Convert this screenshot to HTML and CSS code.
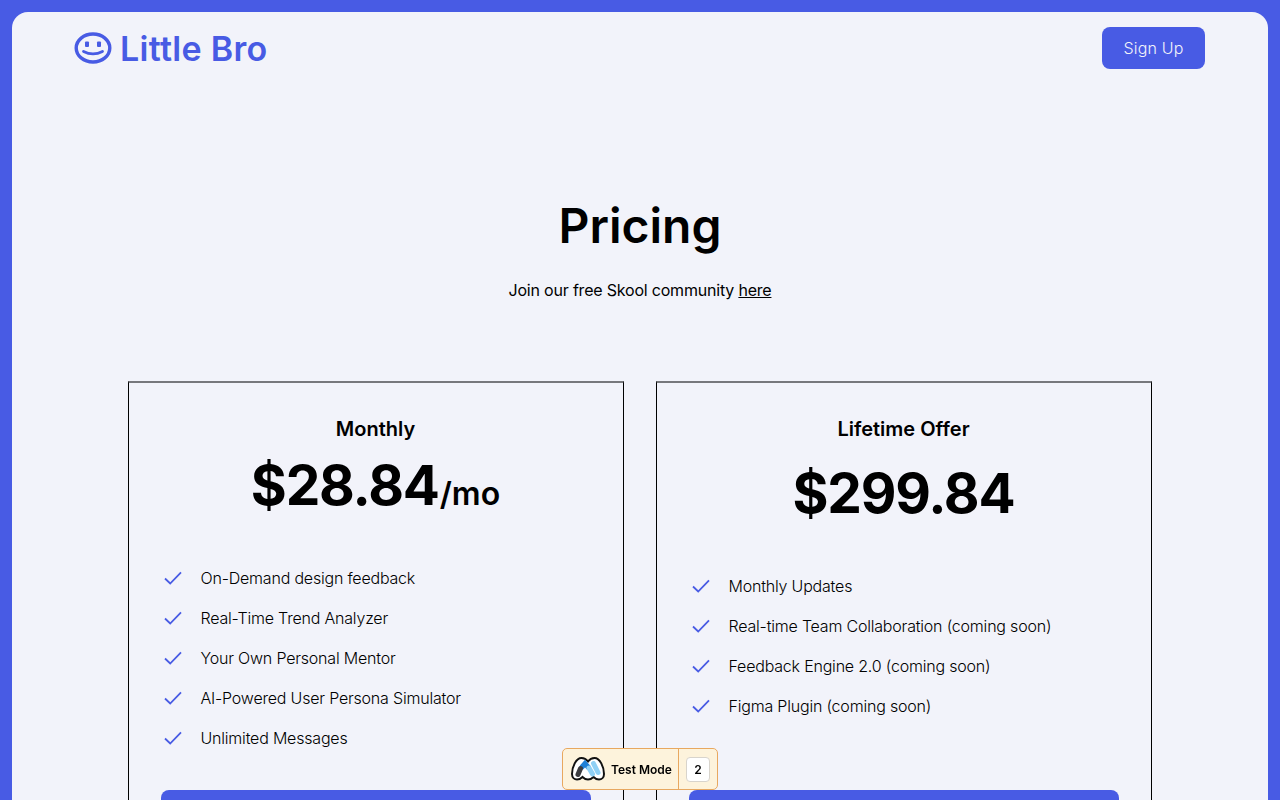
FILE: index.html
```html
<!DOCTYPE html>
<html lang="en">
<head>
    <meta charset="UTF-8">
    <meta name="viewport" content="width=device-width, initial-scale=1.0">
    <title>Little Bro - Pricing</title>
    <link rel="stylesheet" href="styles.css">
</head>
<body>
    <div class="frame">
        <div class="navbar">
            <a class="logo" href="#">
                <svg class="logo-icon" width="38" height="32" viewBox="0 0 38 32" fill="none" stroke="#485be4">
                    <ellipse cx="19" cy="16" rx="16.8" ry="14" stroke-width="3.4"/>
                    <rect x="11" y="9.500" width="4" height="5.500" rx="1" fill="#485be4" stroke="none"/>
                    <rect x="23" y="9.500" width="4" height="5.500" rx="1" fill="#485be4" stroke="none"/>
                    <path d="M9.500 19.500c6 3 13 3 19 0" stroke-width="2.800" stroke-linecap="round"/>
                </svg>
                <span class="logo-text">Little Bro</span>
            </a>
            <a class="signup" href="#">Sign Up</a>
        </div>

        <div class="heading">
            <h1>Pricing</h1>
            <p>Join our free Skool community <a href="#">here</a></p>
        </div>

        <div class="plans">
            <div class="plan">
                <h2>Monthly</h2>
                <div class="price">$28.84<span class="per">/mo</span></div>
                <ul class="features">
                    <li><svg class="check" width="18" height="14" viewBox="0 0 18 14" fill="none" stroke="#485be4" stroke-width="1.800"><path d="M1 7.500l5.200 5L17 1.300"/></svg>On-Demand design feedback</li>
                    <li><svg class="check" width="18" height="14" viewBox="0 0 18 14" fill="none" stroke="#485be4" stroke-width="1.800"><path d="M1 7.500l5.200 5L17 1.300"/></svg>Real-Time Trend Analyzer</li>
                    <li><svg class="check" width="18" height="14" viewBox="0 0 18 14" fill="none" stroke="#485be4" stroke-width="1.800"><path d="M1 7.500l5.200 5L17 1.300"/></svg>Your Own Personal Mentor</li>
                    <li><svg class="check" width="18" height="14" viewBox="0 0 18 14" fill="none" stroke="#485be4" stroke-width="1.800"><path d="M1 7.500l5.200 5L17 1.300"/></svg>AI-Powered User Persona Simulator</li>
                    <li><svg class="check" width="18" height="14" viewBox="0 0 18 14" fill="none" stroke="#485be4" stroke-width="1.800"><path d="M1 7.500l5.200 5L17 1.300"/></svg>Unlimited Messages</li>
                </ul>
                <a class="buy" href="#"></a>
            </div>
            <div class="plan">
                <h2>Lifetime Offer</h2>
                <div class="price price-big">$299.84</div>
                <ul class="features">
                    <li><svg class="check" width="18" height="14" viewBox="0 0 18 14" fill="none" stroke="#485be4" stroke-width="1.800"><path d="M1 7.500l5.200 5L17 1.300"/></svg>Monthly Updates</li>
                    <li><svg class="check" width="18" height="14" viewBox="0 0 18 14" fill="none" stroke="#485be4" stroke-width="1.800"><path d="M1 7.500l5.200 5L17 1.300"/></svg>Real-time Team Collaboration (coming soon)</li>
                    <li><svg class="check" width="18" height="14" viewBox="0 0 18 14" fill="none" stroke="#485be4" stroke-width="1.800"><path d="M1 7.500l5.200 5L17 1.300"/></svg>Feedback Engine 2.0 (coming soon)</li>
                    <li><svg class="check" width="18" height="14" viewBox="0 0 18 14" fill="none" stroke="#485be4" stroke-width="1.800"><path d="M1 7.500l5.200 5L17 1.300"/></svg>Figma Plugin (coming soon)</li>
                </ul>
                <a class="buy" href="#"></a>
            </div>
        </div>
    </div>

    <div class="test-badge">
        <div class="test-label">
            <svg width="36" height="26" viewBox="0 0 36 26" fill="none">
                <path d="M2 18C2 11 6 2 11.500 2c3 0 5 1.500 6.500 3.500C19.500 3.500 21.500 2 24.500 2 30 2 34 11 34 18c0 3.500-2.500 5.500-5 5.500-2.500 0-4-1-5.500-2.500-1.500 1.500-3 2.500-5.500 2.500s-4-1-5.500-2.500C11 22.500 9.500 23.500 7 23.500c-2.500 0-5-2-5-5.500z" fill="#fff" stroke="#111" stroke-width="2"/>
                <path d="M12 11l3-3.500 3.500 4" stroke="#1d7fd6" stroke-width="5" stroke-linecap="round"/>
                <path d="M19 12l3.500 6M23.500 7.500l4.500 9" stroke="#8fd0f5" stroke-width="5" stroke-linecap="round"/>
                <path d="M8 18.500l2.500-6" stroke="#3c3c40" stroke-width="5" stroke-linecap="round"/>
            </svg>
            <span>Test Mode</span>
        </div>
        <div class="test-count"><span>2</span></div>
    </div>
</body>
</html>
```

FILE: styles.css
```css
* {
    box-sizing: border-box;
}
body {
    margin: 0;
    padding: 12px 12px 0;
    height: 100vh;
    overflow: hidden;
    background-color: #485be4;
    font-family: Inter, "Open Sans", sans-serif;
    color: #000;
}
a {
    color: inherit;
}
.frame {
    height: 100%;
    overflow: hidden;
    padding: 15px 63px 0;
    background-color: #f2f3fa;
    border-radius: 16px 16px 0 0;
}
.navbar {
    display: flex;
    justify-content: space-between;
    align-items: flex-start;
}
.logo {
    display: flex;
    align-items: center;
    gap: 8px;
    height: 42px;
    margin-left: -1px;
    text-decoration: none;
    color: #485be4;
}
.logo-text {
    font-size: 34px;
    font-weight: 600;
    letter-spacing: 0.3px;
}
.signup {
    width: 103px;
    height: 42px;
    display: flex;
    align-items: center;
    justify-content: center;
    background-color: #485be4;
    color: #f2f3fa;
    border-radius: 8px;
    font-size: 16px;
    font-weight: 300;
    letter-spacing: 0.2px;
    text-decoration: none;
}
.heading {
    margin-top: 128px;
    text-align: center;
}
.heading h1 {
    margin: 0;
    font-size: 48px;
    line-height: 58px;
    font-weight: 600;
}
.heading p {
    margin: 23px 0 0;
    font-size: 16px;
    line-height: 24px;
    letter-spacing: -0.2px;
}
.plans {
    display: flex;
    justify-content: center;
    gap: 32px;
    margin-top: 79px;
    margin-left: -1px;
}
.plan {
    width: 496px;
    padding: 31px 32px 0;
    border: 1px solid #000;
    border-top: 2px solid #77787c;
}
.plan h2 {
    margin: 0;
    text-align: center;
    font-size: 20px;
    line-height: 30px;
    font-weight: 600;
}
.price {
    margin-top: 9px;
    height: 64px;
    text-align: center;
    font-size: 55px;
    line-height: 64px;
    font-weight: 700;
    letter-spacing: -1.2px;
}
.price-big {
    margin-top: 17px;
}
.per {
    margin-left: 1px;
    font-size: 32px;
    font-weight: 600;
    letter-spacing: 0;
}
.features {
    list-style: none;
    margin: 41px 0 0;
    padding: 0;
    height: 232px;
}
.price-big + .features {
    height: 224px;
}
.features li {
    display: flex;
    align-items: center;
    height: 40px;
    font-size: 16px;
    font-weight: 350;
    letter-spacing: -0.2px;
}
.check {
    margin: 0 19px 0 3px;
    flex-shrink: 0;
}
.buy {
    display: block;
    height: 48px;
    background-color: #485be4;
    border-radius: 8px;
}
.test-badge {
    position: fixed;
    left: 562px;
    top: 748px;
    width: 156px;
    height: 42px;
    display: flex;
    background-color: #fdf3dc;
    border: 1px solid #e8a860;
    border-radius: 5px;
}
.test-label {
    display: flex;
    align-items: center;
    gap: 5px;
    padding-left: 7px;
    width: 116px;
    border-right: 1px solid #e8a860;
    font-size: 12px;
    font-weight: 600;
}
.test-count {
    flex: 1;
    display: flex;
    align-items: center;
    justify-content: center;
}
.test-count span {
    width: 24px;
    height: 25px;
    display: flex;
    align-items: center;
    justify-content: center;
    background-color: #fff;
    border: 1px solid #d8d4cc;
    border-radius: 4px;
    font-size: 12px;
    font-weight: 600;
}
```
